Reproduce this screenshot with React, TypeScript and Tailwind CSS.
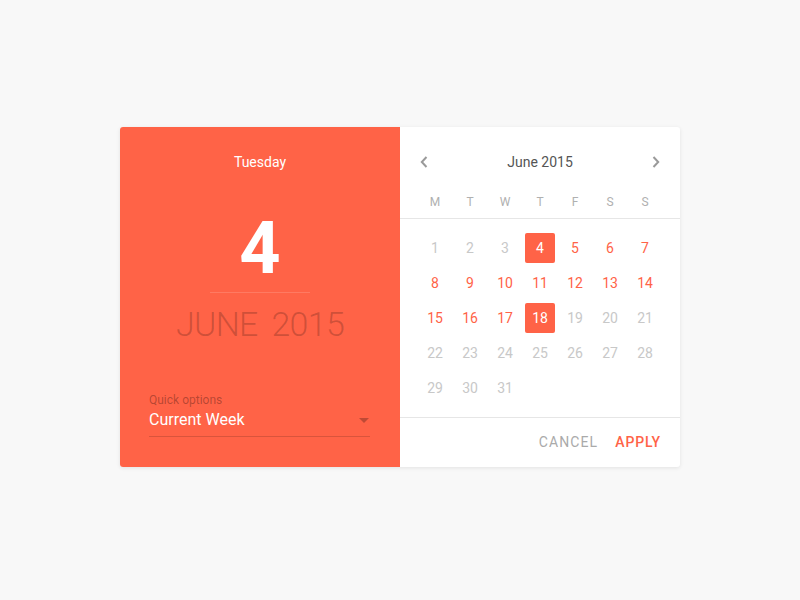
import React from "react";

const days: { n: number; kind: "grey" | "red" | "sel" }[] = [];
for (let i = 1; i <= 31; i++) {
  let kind: "grey" | "red" | "sel" = "grey";
  if (i === 4 || i === 18) kind = "sel";
  else if (i >= 5 && i <= 17) kind = "red";
  days.push({ n: i, kind });
}

export default function App() {
  return (
    <div
      className="w-[800px] h-[600px] bg-[#f8f8f8] pt-[127px]"
      style={{ fontFamily: "Roboto, 'Liberation Sans', sans-serif" }}
    >
      <div className="mx-auto w-[560px] h-[340px] flex rounded-[3px] overflow-hidden shadow-[0_1px_4px_rgba(0,0,0,0.09)] bg-white">
        {/* Left panel */}
        <div className="w-[280px] h-full bg-[#ff6347] flex flex-col items-center">
          <div className="mt-[25px] text-[14px] leading-[20px] text-white">Tuesday</div>
          <div className="mt-[41px] text-[72px] leading-[72px] font-bold text-white">4</div>
          <div className="mt-[7px] h-px w-[100px] bg-white/15" />
          <div className="mt-[14px] text-[34px] leading-[34px] font-light text-black/20 whitespace-pre tracking-[-0.02em] [word-spacing:6px]">
            JUNE 2015
          </div>
          <div className="mt-auto mb-[30px] w-[221px] mr-[1px] border-b border-black/15 pb-[4px]">
            <div className="text-[12px] leading-[16px] text-black/30">Quick options</div>
            <div className="flex items-center justify-between">
              <span className="text-[16px] leading-[24px] text-white">Current Week</span>
              <svg width="10" height="5" viewBox="0 0 10 5" className="mr-[1px]">
                <path d="M0 0 L10 0 L5 5 Z" fill="rgba(0,0,0,0.25)" />
              </svg>
            </div>
          </div>
        </div>
        {/* Right panel */}
        <div className="w-[280px] h-full flex flex-col">
          <div className="mt-[15px] h-[40px] flex items-center justify-between px-[20px]">
            <svg width="8" height="12" viewBox="0 0 8 12">
              <path d="M6.5 1 L1.8 6 L6.5 11" fill="none" stroke="#9a9a9a" strokeWidth="2" />
            </svg>
            <span className="text-[14px] text-[#555]">June 2015</span>
            <svg width="8" height="12" viewBox="0 0 8 12">
              <path d="M1.5 1 L6.2 6 L1.5 11" fill="none" stroke="#9a9a9a" strokeWidth="2" />
            </svg>
          </div>
          <div className="mt-[12px] px-[17.5px] grid grid-cols-[repeat(7,35px)] pb-[8px] border-b border-[#e6e6e6]">
            {["M", "T", "W", "T", "F", "S", "S"].map((d, i) => (
              <div key={i} className="text-center text-[12px] leading-[16px] text-[#b0b0b0]">
                {d}
              </div>
            ))}
          </div>
          <div className="px-[17.5px] pt-[11.5px] grid grid-cols-[repeat(7,35px)] auto-rows-[35px]">
            {days.map((d) => (
              <div key={d.n} className="flex items-center justify-center">
                {d.kind === "sel" ? (
                  <div className="w-[30px] h-[30px] rounded-[2px] bg-[#ff6347] text-white flex items-center justify-center text-[14px]">
                    {d.n}
                  </div>
                ) : (
                  <span
                    className={
                      d.kind === "red"
                        ? "text-[14px] text-[#ff6347]"
                        : "text-[14px] text-[#c8c8c8]"
                    }
                  >
                    {d.n}
                  </span>
                )}
              </div>
            ))}
          </div>
          <div className="mt-auto h-[50px] border-t border-[#e6e6e6] flex items-center justify-end pr-[19px] gap-[17px]">
            <span className="text-[14px] tracking-[0.08em] text-[#aaaaaa]">CANCEL</span>
            <span className="text-[14px] font-medium tracking-[0.06em] text-[#ff6347]">APPLY</span>
          </div>
        </div>
      </div>
    </div>
  );
}
